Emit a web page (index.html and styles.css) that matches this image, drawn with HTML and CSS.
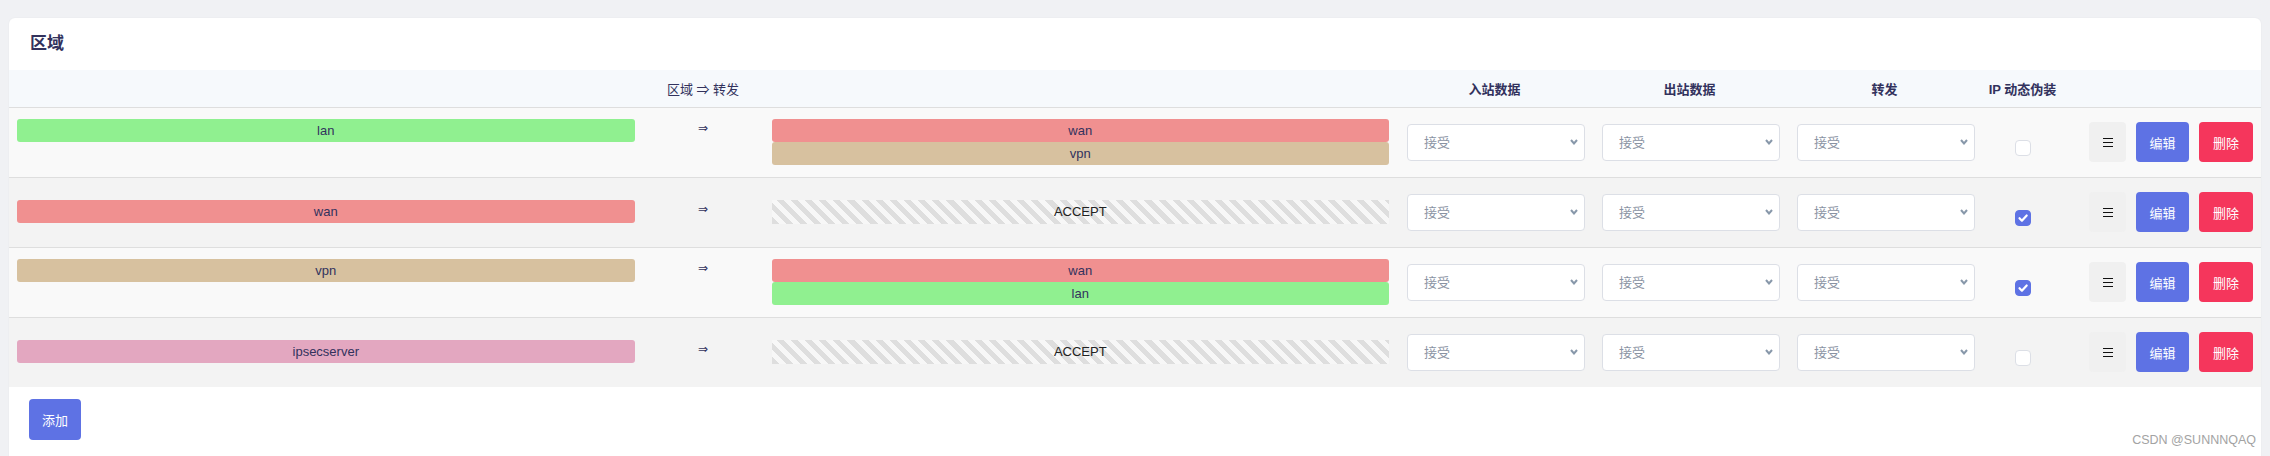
FILE: index.html
```html
<!DOCTYPE html>
<html lang="zh-CN">
<head>
<meta charset="UTF-8">
<meta name="viewport" content="width=device-width, initial-scale=1.0">
<title>区域</title>
<link rel="stylesheet" href="styles.css">
</head>
<body>

<div class="container">
  <h3>区域</h3>

  <table class="zones">
    <colgroup>
      <col>
      <col class="col-policy">
      <col class="col-policy">
      <col class="col-policy">
      <col class="col-masq">
      <col class="col-actions">
    </colgroup>
    <thead>
      <tr>
        <th class="th-zone">区域 ⇒ 转发</th>
        <th>入站数据</th>
        <th>出站数据</th>
        <th>转发</th>
        <th>IP 动态伪装</th>
        <th></th>
      </tr>
    </thead>
    <tbody>
      <tr>
        <td>
          <div class="zone-fwd">
            <div class="badges"><span class="badge lan">lan</span></div>
            <span class="arrow">⇒</span>
            <div class="badges"><span class="badge wan">wan</span><span class="badge vpn">vpn</span></div>
          </div>
        </td>
        <td class="policy"><select><option>接受</option></select></td>
        <td class="policy"><select><option>接受</option></select></td>
        <td class="policy"><select><option>接受</option></select></td>
        <td><span class="check"></span></td>
        <td>
          <div class="actions">
            <button class="btn btn-more"><svg width="10" height="9" viewBox="0 0 10 9"><path d="M0 0.5h10M0 4.5h10M0 8.5h10" stroke="#111" stroke-width="1"/></svg></button>
            <button class="btn btn-edit">编辑</button>
            <button class="btn btn-del">删除</button>
          </div>
        </td>
      </tr>
      <tr>
        <td>
          <div class="zone-fwd">
            <div class="badges"><span class="badge wan">wan</span></div>
            <span class="arrow">⇒</span>
            <div class="badges"><span class="badge empty">ACCEPT</span></div>
          </div>
        </td>
        <td class="policy"><select><option>接受</option></select></td>
        <td class="policy"><select><option>接受</option></select></td>
        <td class="policy"><select><option>接受</option></select></td>
        <td><span class="check on"><svg width="14" height="14" viewBox="0 0 14 14"><path d="M3.5 7.2l2.4 2.5 4.8-5.2" fill="none" stroke="#fff" stroke-width="2.2" stroke-linecap="round" stroke-linejoin="round"/></svg></span></td>
        <td>
          <div class="actions">
            <button class="btn btn-more"><svg width="10" height="9" viewBox="0 0 10 9"><path d="M0 0.5h10M0 4.5h10M0 8.5h10" stroke="#111" stroke-width="1"/></svg></button>
            <button class="btn btn-edit">编辑</button>
            <button class="btn btn-del">删除</button>
          </div>
        </td>
      </tr>
      <tr>
        <td>
          <div class="zone-fwd">
            <div class="badges"><span class="badge vpn">vpn</span></div>
            <span class="arrow">⇒</span>
            <div class="badges"><span class="badge wan">wan</span><span class="badge lan">lan</span></div>
          </div>
        </td>
        <td class="policy"><select><option>接受</option></select></td>
        <td class="policy"><select><option>接受</option></select></td>
        <td class="policy"><select><option>接受</option></select></td>
        <td><span class="check on"><svg width="14" height="14" viewBox="0 0 14 14"><path d="M3.5 7.2l2.4 2.5 4.8-5.2" fill="none" stroke="#fff" stroke-width="2.2" stroke-linecap="round" stroke-linejoin="round"/></svg></span></td>
        <td>
          <div class="actions">
            <button class="btn btn-more"><svg width="10" height="9" viewBox="0 0 10 9"><path d="M0 0.5h10M0 4.5h10M0 8.5h10" stroke="#111" stroke-width="1"/></svg></button>
            <button class="btn btn-edit">编辑</button>
            <button class="btn btn-del">删除</button>
          </div>
        </td>
      </tr>
      <tr>
        <td>
          <div class="zone-fwd">
            <div class="badges"><span class="badge ipsec">ipsecserver</span></div>
            <span class="arrow">⇒</span>
            <div class="badges"><span class="badge empty">ACCEPT</span></div>
          </div>
        </td>
        <td class="policy"><select><option>接受</option></select></td>
        <td class="policy"><select><option>接受</option></select></td>
        <td class="policy"><select><option>接受</option></select></td>
        <td><span class="check"></span></td>
        <td>
          <div class="actions">
            <button class="btn btn-more"><svg width="10" height="9" viewBox="0 0 10 9"><path d="M0 0.5h10M0 4.5h10M0 8.5h10" stroke="#111" stroke-width="1"/></svg></button>
            <button class="btn btn-edit">编辑</button>
            <button class="btn btn-del">删除</button>
          </div>
        </td>
      </tr>
    </tbody>
  </table>

  <div class="footer">
    <button class="btn btn-add">添加</button>
    <span class="watermark">CSDN @SUNNNQAQ</span>
  </div>
</div>

</body>
</html>
```

FILE: styles.css
```css
body {
  margin: 0;
  padding: 18px 9px 0;
  background-color: #f0f1f4;
  font-family: "Liberation Sans", "Noto Sans CJK SC", sans-serif;
  font-size: 13px;
  color: #32325d;
}

.container {
  background-color: #fff;
  border-radius: 6px 6px 0 0;
  box-shadow: 0 0 2px rgba(0, 0, 0, 0.05);
}

h3 {
  margin: 0;
  padding: 0 21px;
  height: 52px;
  line-height: 52px;
  font-size: 17px;
  font-weight: bold;
}

.zones {
  width: 100%;
  border-collapse: collapse;
  table-layout: fixed;
}

.col-policy {
  width: 195px;
}

.col-masq {
  width: 81px;
}

.col-actions {
  width: 198px;
}

.zones th {
  height: 37px;
  padding: 0 4px;
  background-color: #f6f9fc;
  font-weight: 600;
  text-align: center;
  white-space: nowrap;
}

.zones th.th-zone {
  font-weight: normal;
}

.zones td {
  padding: 11px 8px 12px;
  border-top: 1px solid #dedede;
  vertical-align: middle;
  background-color: #f9f9f9;
}

.zones td.policy {
  padding-left: 10px;
  padding-right: 7px;
}

.zones tbody tr:nth-child(even) td {
  background-color: #f3f3f3;
}

.zone-fwd {
  display: grid;
  grid-template-columns: 1fr 137px 1fr;
  align-items: start;
}

.badges {
  display: flex;
  flex-direction: column;
}

.badge {
  display: block;
  height: 23px;
  line-height: 23px;
  text-align: center;
  border-radius: 3px;
  color: #32325d;
}

.badge.lan {
  background-color: #90f090;
}

.badge.wan {
  background-color: #f09090;
}

.badge.vpn {
  background-color: #d7c19f;
}

.badge.ipsec {
  background-color: #e3a7c0;
}

.badge.empty {
  height: 24px;
  line-height: 24px;
  border-radius: 0;
  color: #222;
  background: repeating-linear-gradient(45deg, #dedede 0 5px, #f7f7f7 5px 10px);
}

.arrow {
  text-align: center;
  line-height: 19px;
  font-size: 12px;
  font-family: "DejaVu Sans", sans-serif;
}

select {
  display: block;
  width: 100%;
  height: 37px;
  padding: 0 24px 0 16px;
  font-family: inherit;
  font-size: 13px;
  color: #8a93a3;
  background: #fff url("data:image/svg+xml,%3Csvg xmlns='http://www.w3.org/2000/svg' width='8' height='6' viewBox='0 0 8 6'%3E%3Cpath d='M1 1l3 3.5L7 1' fill='none' stroke='%238898aa' stroke-width='2'/%3E%3C/svg%3E") no-repeat right 6px center;
  border: 1px solid #dcdfe6;
  border-radius: 4px;
  appearance: none;
  -webkit-appearance: none;
}

.check {
  display: block;
  box-sizing: border-box;
  width: 16px;
  height: 16px;
  margin: 12px auto 0;
  border: 1px solid #dcdfe6;
  border-radius: 4px;
  background-color: #fff;
}

.check.on {
  border-color: #5e72e4;
  background-color: #5e72e4;
}

.check svg {
  display: block;
  margin: 0;
}

.actions {
  display: flex;
  justify-content: flex-end;
  gap: 10px;
  padding: 3px 0;
}

.btn {
  height: 40px;
  padding: 0;
  border: none;
  border-radius: 4px;
  font-family: inherit;
  font-size: 13px;
  color: #fff;
  cursor: pointer;
}

.btn-more {
  width: 37px;
  background-color: #f0f0f0;
}

.btn-more svg {
  display: block;
  margin: 0 auto;
}

.btn-edit {
  width: 53px;
  background-color: #5e72e4;
}

.btn-del {
  width: 54px;
  background-color: #f5365c;
}

.footer {
  position: relative;
  padding: 12px 20px 20px;
}

.btn-add {
  width: 52px;
  height: 41px;
  background-color: #5e72e4;
}

.watermark {
  position: absolute;
  right: 5px;
  top: 46px;
  font-size: 12.5px;
  color: #a3a3a3;
}
```
